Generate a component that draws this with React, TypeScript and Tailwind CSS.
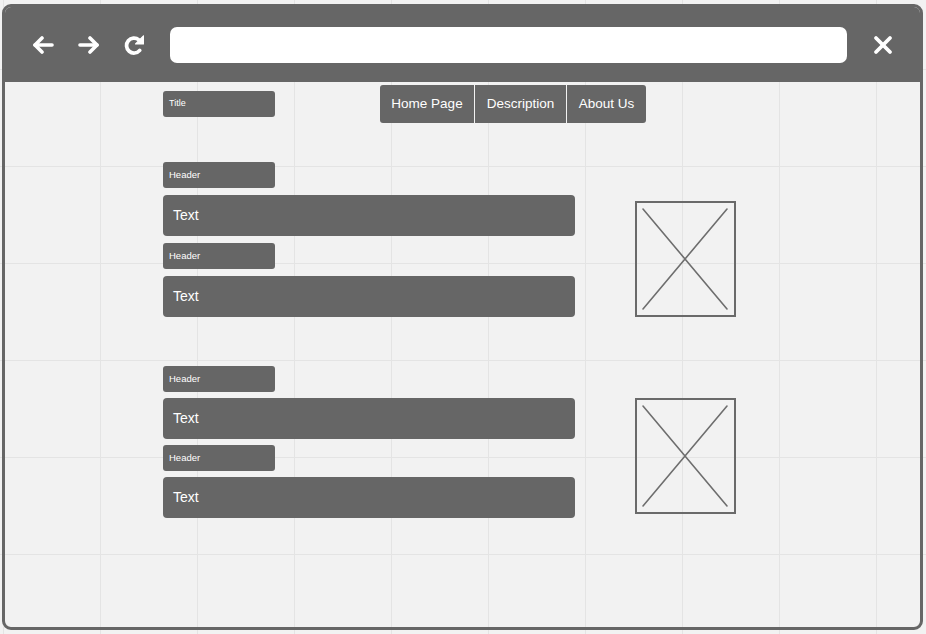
type Section = { gap: string; top: string; imgTop: string }

// two blocks of header/text pairs, each with an image placeholder beside
const sections: Section[] = [
    { gap: "gap-[7px]", top: "mt-[39px]", imgTop: "mt-[39px]" },
    { gap: "gap-[6px]", top: "mt-[49px]", imgTop: "mt-[32px]" },
]

const navItems = [
    { label: "Home Page", cls: "w-[94px] rounded-l-[3px]" },
    { label: "Description", cls: "w-[91px]" },
    { label: "About Us", cls: "w-[79px] rounded-r-[3px]" },
]

function ArrowLeft() {
    return (
        <svg width="22" height="18" viewBox="0 0 22 18" fill="none" stroke="white" strokeWidth="3.6" strokeLinecap="round" strokeLinejoin="round">
            <path d="M3 9H20" />
            <path d="M10 2L3 9L10 16" />
        </svg>
    )
}

function ArrowRight() {
    return (
        <svg width="22" height="18" viewBox="0 0 22 18" fill="none" stroke="white" strokeWidth="3.6" strokeLinecap="round" strokeLinejoin="round">
            <path d="M2 9H19" />
            <path d="M12 2L19 9L12 16" />
        </svg>
    )
}

function Reload() {
    return (
        <svg width="22" height="22" viewBox="0 0 20 20" fill="none">
            <path d="M15.2 14.9A6.8 6.8 0 1 1 14.4 5.3" stroke="white" strokeWidth="3.4" strokeLinecap="round" />
            <path d="M18.6 1.6V9H11.4Z" fill="white" stroke="white" strokeWidth="1" strokeLinejoin="round" />
        </svg>
    )
}

function Close() {
    return (
        <svg width="20" height="20" viewBox="0 0 20 20" fill="none" stroke="white" strokeWidth="3.8" strokeLinecap="round">
            <path d="M3 3L17 17" />
            <path d="M17 3L3 17" />
        </svg>
    )
}

function ImagePlaceholder({ className }: { className: string }) {
    return (
        <div className={`h-[116px] w-[101px] shrink-0 border-2 border-[#6a6a6a] ${className}`}>
            <svg width="97" height="112" viewBox="0 0 97 112" fill="none" stroke="#6e6e6e" strokeWidth="1.6" strokeLinecap="round">
                <path d="M6 6L90 106" />
                <path d="M90 6L6 106" />
            </svg>
        </div>
    )
}

export default function App() {
    return (
        <div className="h-[634px] w-[926px] overflow-hidden bg-[#f2f2f2] pl-[2px] pt-[4px] font-['Liberation_Sans',Arial,sans-serif] [background-image:linear-gradient(to_right,#e4e4e4_1px,transparent_1px),linear-gradient(to_bottom,#e4e4e4_1px,transparent_1px)] [background-position:3px_69px] [background-size:97px_97px]">
            <div className="h-[626px] w-[921px] overflow-hidden rounded-[9px] border-[3px] border-[#666666]">
                {/* browser chrome */}
                <div className="flex h-[75px] items-center bg-[#666666] pl-[27px]">
                    <ArrowLeft />
                    <div className="ml-[24px]">
                        <ArrowRight />
                    </div>
                    <div className="ml-[23px]">
                        <Reload />
                    </div>
                    <div className="ml-[25px] h-[36px] w-[677px] rounded-[7px] bg-white" />
                    <div className="ml-[26px]">
                        <Close />
                    </div>
                </div>

                <div className="pl-[158px]">
                    <div className="flex items-start">
                        <div className="mt-[9px] flex h-[26px] w-[112px] items-center rounded-[3px] bg-[#666666] pl-[6px] text-[9px] text-white">
                            Title
                        </div>
                        <div className="ml-[105px] mt-[3px] flex gap-px">
                            {navItems.map(n => (
                                <div key={n.label} className={`flex h-[38px] items-center justify-center bg-[#666666] text-[13.5px] text-white ${n.cls}`}>
                                    {n.label}
                                </div>
                            ))}
                        </div>
                    </div>

                    {sections.map((s, i) => (
                        <div key={i} className={`flex items-start ${s.top}`}>
                            <div className={`flex w-[412px] flex-col ${s.gap}`}>
                                {[0, 1].map(j => (
                                    <div key={j} className={`flex flex-col ${s.gap}`}>
                                        <div className="flex h-[26px] w-[112px] items-center rounded-[3px] bg-[#666666] pl-[6px] text-[9.5px] text-white">
                                            Header
                                        </div>
                                        <div className="flex h-[41px] items-center rounded-[4px] bg-[#666666] pl-[10px] text-[14px] text-white">
                                            Text
                                        </div>
                                    </div>
                                ))}
                            </div>
                            <ImagePlaceholder className={`ml-[60px] ${s.imgTop}`} />
                        </div>
                    ))}
                </div>
            </div>
        </div>
    )
}
